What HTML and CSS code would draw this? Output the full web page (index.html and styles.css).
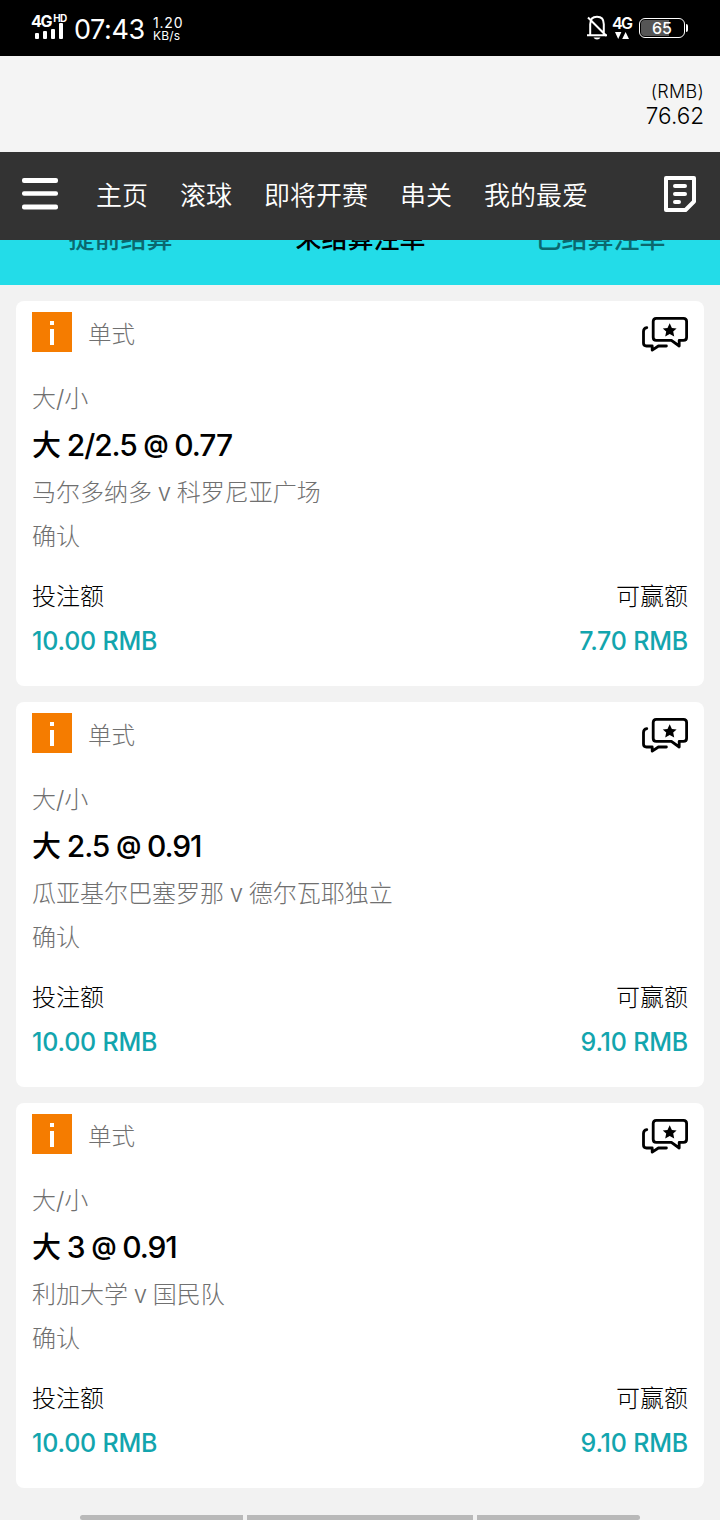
FILE: index.html
```
<!DOCTYPE html>
<html lang="zh-CN">
<head>
<meta charset="utf-8">
<title>未结算注单</title>
<link rel="stylesheet" href="styles.css">
</head>
<body>
<svg class="defs" width="0" height="0">
  <symbol id="chat" viewBox="0 0 46 36">
    <g fill="none" stroke="#000" stroke-width="2.8" stroke-linejoin="round" stroke-linecap="round">
      <path d="M14.2 2.4H41.4Q44.6 2.4 44.6 5.6V21.2Q44.6 24.3 41.4 24.3H37.2V30L29.4 24.3H14.2Q11.2 24.3 11.2 21.2V5.6Q11.2 2.4 14.2 2.4Z"/>
      <path d="M4.8 11.7Q1.5 12.2 1.5 15.5V27Q1.5 30 4.5 30H10.2V34.2L16.4 30H24.4"/>
    </g>
    <path d="M27.7 7.2L29.9 11.9L34.6 12.4L31.2 15.6L32.2 20.4L27.7 17.9L23.2 20.4L24.2 15.6L20.8 12.4L25.5 11.9Z"/>
  </symbol>
</svg>
<header class="status">
  <div class="signal">
    <div class="net">4G<span class="hd">HD</span></div>
    <svg width="28" height="16" viewBox="0 0 28 16" fill="#fff"><rect x="0" y="10" width="4" height="6" rx="1"/><rect x="8" y="8" width="4" height="8" rx="1"/><rect x="16" y="6" width="4" height="10" rx="1"/><rect x="24" y="0" width="4" height="16" rx="1"/></svg>
  </div>
  <div class="clock">07:43</div>
  <div class="speed"><span class="rate">1.20</span><span class="unit">KB/s</span></div>
  <div class="spacer"></div>
  <svg class="bell" width="20" height="25" viewBox="0 0 20 25" fill="none" stroke="#fff" stroke-width="2"><path d="M3.2 20V9.2Q3.2 1.8 10 1.8T16.8 9.2V20M0 20.3H20M1 2.5L19.5 21"/><path d="M6.5 22.5H13.5Q12.5 24.5 10 24.5T6.5 22.5Z" fill="#fff" stroke="none"/></svg>
  <div class="data">
    <div class="datanet">4G</div>
    <svg width="14" height="7" viewBox="0 0 14 7" fill="#fff"><path d="M0 0H6.4L3.2 7ZM7.2 7H14L10.6 0Z"/></svg>
  </div>
  <div class="battery"><div class="shell">65</div><div class="nub"></div></div>
</header>
<section class="balance"><div class="currency">(RMB)</div><div class="sum">76.62</div></section>
<nav class="nav">
  <svg class="menu" width="36" height="32" viewBox="0 0 36 32" fill="#fff"><rect y="0" width="36" height="5" rx="2"/><rect y="13.2" width="36" height="4.6" rx="2"/><rect y="26.4" width="36" height="5" rx="2"/></svg>
  <a>主页</a><a>滚球</a><a>即将开赛</a><a>串关</a><a>我的最爱</a>
  <svg class="slip" width="32" height="36" viewBox="0 0 32 36" fill="none" stroke="#fff" stroke-width="4"><path stroke-linejoin="round" d="M2 2H30V25.5L21.5 34H2Z"/><path stroke-linecap="round" d="M11 10H21M11 18H21M11 26H15"/></svg>
</nav>
<div class="tabs"><div class="tab">提前结算</div><div class="tab active">未结算注单</div><div class="tab">已结算注单</div></div>
<main class="list">
  <article class="card">
    <div class="top"><div class="info"><i class="dot"></i><i class="stem"></i></div><span class="kind">单式</span><svg class="chat" width="46" height="36"><use href="#chat"/></svg></div>
    <div class="market">大/小</div>
    <div class="pick"><span class="side">大</span> 2/2.5 <span class="at">@</span> 0.77</div>
    <div class="match">马尔多纳多 v 科罗尼亚广场</div>
    <div class="state">确认</div>
    <div class="labels"><span>投注额</span><span>可赢额</span></div>
    <div class="amounts"><span>10.00 RMB</span><span>7.70 RMB</span></div>
  </article>
  <article class="card">
    <div class="top"><div class="info"><i class="dot"></i><i class="stem"></i></div><span class="kind">单式</span><svg class="chat" width="46" height="36"><use href="#chat"/></svg></div>
    <div class="market">大/小</div>
    <div class="pick"><span class="side">大</span> 2.5 <span class="at">@</span> 0.91</div>
    <div class="match">瓜亚基尔巴塞罗那 v 德尔瓦耶独立</div>
    <div class="state">确认</div>
    <div class="labels"><span>投注额</span><span>可赢额</span></div>
    <div class="amounts"><span>10.00 RMB</span><span>9.10 RMB</span></div>
  </article>
  <article class="card">
    <div class="top"><div class="info"><i class="dot"></i><i class="stem"></i></div><span class="kind">单式</span><svg class="chat" width="46" height="36"><use href="#chat"/></svg></div>
    <div class="market">大/小</div>
    <div class="pick"><span class="side">大</span> 3 <span class="at">@</span> 0.91</div>
    <div class="match">利加大学 v 国民队</div>
    <div class="state">确认</div>
    <div class="labels"><span>投注额</span><span>可赢额</span></div>
    <div class="amounts"><span>10.00 RMB</span><span>9.10 RMB</span></div>
  </article>
</main>
<footer class="gesture"><div class="seg first"></div><div class="seg mid"></div><div class="seg last"></div></footer>
</body>
</html>
```
FILE: styles.css
```
* { box-sizing: border-box; }
body { margin: 0; width: 720px; height: 1520px; overflow: hidden; display: flex; flex-direction: column; background: #f2f2f2; color: #000; font-family: Inter, "Noto Sans CJK SC", sans-serif; font-weight: 300; }
svg { display: block; flex: none; }
.defs { position: absolute; }
.status { height: 56px; flex: none; background: #000; color: #fff; display: flex; align-items: flex-start; padding: 0 32px 0 31px; }
.signal { width: 36px; padding-top: 14px; }
.signal svg { margin: -5px 0 0 4px; }
.net { display: flex; align-items: flex-start; height: 14px; font-size: 16px; line-height: 15px; font-weight: 700; letter-spacing: -1.3px; }
.hd { font-size: 10px; line-height: 9px; font-weight: 700; letter-spacing: -0.6px; margin-left: 2px; }
.clock { width: 79px; padding-left: 7px; font-size: 27px; line-height: 32px; margin-top: 14px; font-weight: 400; letter-spacing: -0.4px; white-space: nowrap; }
.speed { display: flex; flex-direction: column; padding-left: 7px; margin-top: 16px; font-weight: 400; }
.rate { font-size: 14px; line-height: 14px; letter-spacing: 0.8px; }
.unit { font-size: 12px; line-height: 11px; letter-spacing: 0.2px; }
.spacer { flex: 1; }
.bell { margin-top: 15px; }
.data { width: 20px; margin: 15px 8px 0 5px; }
.datanet { font-size: 16px; line-height: 16px; height: 17px; font-weight: 600; letter-spacing: -1.6px; }
.data svg { margin-left: 3px; }
.battery { display: flex; align-items: center; margin-top: 18px; }
.shell { width: 46px; height: 20px; margin-left: -1px; border: 1.5px solid #fff; border-radius: 6px; font-size: 16px; font-weight: 500; text-align: center; background: linear-gradient(90deg, #555 0 28px, #000 28px) content-box; padding: 1px; line-height: 16px; }
.nub { width: 2px; height: 8px; margin-left: 1px; background: #fff; border-radius: 0 2px 2px 0; }
.balance { height: 96px; flex: none; padding: 24px 16px 0; background: #f4f4f4; text-align: right; }
.currency { font-size: 18px; line-height: 24px; letter-spacing: 0.3px; }
.sum { font-size: 22.5px; line-height: 23px; }
.nav { height: 88px; flex: none; background: #333; color: #fff; display: flex; align-items: center; gap: 32px; padding: 0 24px 0 22px; font-size: 26px; line-height: 40px; font-weight: 350; }
.nav a { white-space: nowrap; }
.menu { margin: -4px 6px 0 0; }
.slip { margin: -4px 0 0 auto; }
.tabs { height: 45px; flex: none; overflow: hidden; display: grid; grid-template-columns: repeat(3, 1fr); background: #23dce8; text-align: center; font-size: 26px; line-height: 40px; font-weight: 500; }
.tab { margin-top: -21px; padding-left: 1px; color: #0b686e; }
.tab.active { color: #000; }
.list { padding: 16px 16px 0; display: flex; flex-direction: column; gap: 16px; }
.card { height: 385px; padding: 0 16px; border-radius: 8px; background: #fff; }
.top { height: 75px; padding-top: 11px; display: flex; align-items: flex-start; }
.info { width: 40px; height: 40px; background: #f57c00; display: flex; flex-direction: column; align-items: center; padding-top: 9px; gap: 4px; }
.dot { width: 4px; height: 4px; background: #fff; }
.stem { width: 4px; height: 16px; background: #fff; }
.kind { margin-left: 16px; font-size: 23.5px; line-height: 45px; color: #707070; }
.chat { margin: 4px 0 0 auto; }
.market, .match, .state { font-size: 24px; line-height: 44px; height: 44px; color: #707070; white-space: nowrap; word-spacing: -1px; }
.market { height: 46px; line-height: 46px; }
.pick { font-size: 30px; line-height: 47px; height: 49px; font-weight: 500; letter-spacing: -1.1px; white-space: nowrap; }
.side { font-size: 29px; line-height: 1; }
.at { font-size: 25px; font-weight: 600; vertical-align: 3px; line-height: 1; }
.labels, .amounts { display: flex; justify-content: space-between; height: 44px; line-height: 44px; font-size: 24px; }
.labels { margin-top: 16px; }
.amounts { color: #13a5ae; font-size: 25px; font-weight: 500; letter-spacing: -0.2px; }
.gesture { display: flex; gap: 4px; margin: 27px 80px 0; height: 5px; }
.seg { background: #b9b9b9; height: 5px; }
.first { width: 163px; border-radius: 3px 0 0 3px; }
.mid { width: 226px; }
.last { width: 163px; border-radius: 0 3px 3px 0; }
```
